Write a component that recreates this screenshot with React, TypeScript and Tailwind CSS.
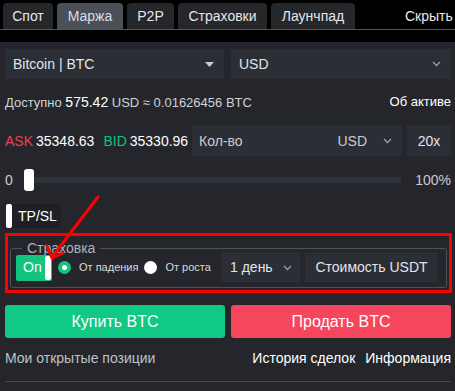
import React from "react";

const Chevron = ({ className = "" }: { className?: string }) => (
  <svg width="9" height="6" viewBox="0 0 9 6" className={className}>
    <path d="M1 1 L4.5 4.5 L8 1" fill="none" stroke="#9aa0a8" strokeWidth="1.3" />
  </svg>
);

export default function App() {
  const tabs = [
    { t: "Спот", w: "w-[50px]" },
    { t: "Маржа", w: "w-[66px]", active: true },
    { t: "P2P", w: "w-[47px]" },
    { t: "Страховки", w: "w-[89px]" },
    { t: "Лаунчпад", w: "w-[84px]" },
  ];
  return (
    <div className="relative w-[455px] h-[391px] overflow-hidden bg-[#25262b] font-['Liberation_Sans',Arial,sans-serif] text-white">
      {/* header */}
      <div className="h-[42px] bg-black">
        <div className="flex items-end h-[30px] border-b border-[#50545b] pl-[3px]">
          {tabs.map((x) => (
            <div
              key={x.t}
              className={`${x.w} h-[26px] mr-[4px] rounded-t-[4px] flex items-center justify-center text-[14px] ${
                x.active ? "bg-[#4b5058] text-[#d8dde5]" : "bg-[#25272b] text-[#e4e6ea]"
              }`}
            >
              {x.t}
            </div>
          ))}
          <div className="ml-[46px] h-[26px] flex items-center text-[14px] text-[#e8e8e8] whitespace-nowrap">Скрыть</div>
        </div>
      </div>

      <div className="pl-[5px] pr-[4px]">
        {/* selects */}
        <div className="flex gap-[7px] mt-[7px]">
          <div className="w-[219px] h-[30px] bg-[#2b2e35] flex items-center justify-between pl-[8px] pr-[10px] text-[14px] text-[#e2e4e8]">
            <span>Bitcoin | BTC</span>
            <svg width="9" height="5" viewBox="0 0 9 5"><path d="M0 0 H9 L4.5 5Z" fill="#c8ccd2" /></svg>
          </div>
          <div className="flex-1 h-[30px] bg-[#2b2e35] flex items-center justify-between pl-[8px] pr-[10px] text-[14px] text-[#e2e4e8]">
            <span>USD</span>
            <Chevron />
          </div>
        </div>

        {/* available */}
        <div className="flex justify-between items-center mt-[14px] h-[18px] text-[13px]">
          <div className="text-[#d0d2d6]">
            Доступно <span className="text-white text-[14px]">575.42</span> USD ≈ 0.01626456 BTC
          </div>
          <div className="text-white">Об активе</div>
        </div>

        {/* ask/bid */}
        <div className="flex items-center mt-[15px] h-[30px] text-[14px]">
          <div className="flex-1 flex items-center whitespace-nowrap">
            <span className="text-[#f23e53]">ASK</span>
            <span className="ml-[3px] text-white">35348.63</span>
            <span className="ml-[9px] text-[#14c17b]">BID</span>
            <span className="ml-[3px] text-white">35330.96</span>
          </div>
          <div className="shrink-0 w-[210px] h-[30px] bg-[#2b2e35] flex items-center pl-[7px] pr-[10px] text-[#c9ccd1]">
            <span>Кол-во</span>
            <span className="ml-auto">USD</span>
            <Chevron className="ml-[16px]" />
          </div>
          <div className="shrink-0 ml-[5px] w-[44px] h-[30px] bg-[#2b2e35] flex items-center justify-center text-[#e2e4e8]">20x</div>
        </div>

        {/* slider */}
        <div className="flex items-center mt-[13px] h-[22px] text-[14px] text-[#c8cbd0]">
          <span className="w-[19px]">0</span>
          <div className="w-[10px] h-[22px] bg-white rounded-[3px]" />
          <div className="w-[367px] h-[6px] bg-[#2e323a]" />
          <span className="ml-auto">100%</span>
        </div>

        {/* tp/sl */}
        <div className="mt-[13px] ml-[1px] w-[55px] h-[24px] bg-[#1e2024] rounded-[3px] flex items-center">
          <div className="w-[6px] h-[24px] bg-white rounded-[2px]" />
          <span className="ml-[6px] text-[14px] text-white">TP/SL</span>
        </div>

        {/* insurance */}
        <div className="mt-[5px] -mr-[1px] border-[3px] border-[#ff0000] px-[2px] pt-[4px] pb-0 h-[60px]">
          <fieldset className="border border-[#4e5158] rounded-[3px] pl-[5px] pr-[8px] pb-[4px] h-[48px]">
            <legend className="ml-[6px] px-[5px] text-[14px] leading-[16px] text-[#aeb2b8]">Страховка</legend>
            <div className="flex items-center h-[29px] -mt-[3px] whitespace-nowrap">
              <div className="relative shrink-0 w-[36px] h-[26px] bg-[#13c47f] rounded-[2px] flex items-center">
                <span className="ml-[7px] text-[14px] text-white">On</span>
                <div className="absolute right-[1px] top-[1px] w-[6px] h-[24px] bg-white rounded-[2px]" />
              </div>
              <div className="shrink-0 ml-[6px] w-[13px] h-[13px] rounded-full bg-[#13c47f] flex items-center justify-center">
                <div className="w-[5px] h-[5px] rounded-full bg-white" />
              </div>
              <span className="shrink-0 ml-[8px] text-[11px] text-[#d8dadf]">От падения</span>
              <div className="shrink-0 ml-[6px] w-[13px] h-[13px] rounded-full bg-white" />
              <span className="shrink-0 ml-[8px] text-[11px] text-[#d8dadf]">От роста</span>
              <div className="shrink-0 ml-auto w-[78px] h-[29px] bg-[#2b2e35] flex items-center justify-between pl-[8px] pr-[8px] text-[14px] text-[#e2e4e8]">
                <span>1 день</span>
                <Chevron />
              </div>
              <div className="shrink-0 ml-[5px] w-[133px] h-[29px] bg-[#2b2e35] flex items-center justify-center text-[14px] text-[#e2e4e8]">
                Стоимость USDT
              </div>
            </div>
          </fieldset>
        </div>

        {/* buy sell */}
        <div className="flex gap-[6px] mt-[12px]">
          <div className="w-[220px] h-[33px] bg-[#10c984] rounded-[3px] flex items-center justify-center text-[16px] text-white">Купить BTC</div>
          <div className="flex-1 h-[33px] bg-[#f6465d] rounded-[3px] flex items-center justify-center text-[16px] text-white">Продать BTC</div>
        </div>

        {/* links */}
        <div className="flex items-center mt-[10px] h-[21px] text-[14px]">
          <span className="text-[#bfc2c7]">Мои открытые позиции</span>
          <span className="ml-auto text-white">История сделок</span>
          <span className="ml-[10px] text-white">Информация</span>
        </div>
        <div className="mt-[12px] h-px bg-[#46484d]" />
      </div>

      {/* red arrow overlay */}
      <svg className="absolute left-0 top-0 pointer-events-none" width="455" height="391">
        <line x1="98" y1="197" x2="52" y2="257" stroke="#ff0000" strokeWidth="3" strokeLinecap="round" />
        <polyline points="47,246 52,258 63,253" fill="none" stroke="#ff0000" strokeWidth="3" strokeLinecap="round" strokeLinejoin="round" />
      </svg>
    </div>
  );
}
